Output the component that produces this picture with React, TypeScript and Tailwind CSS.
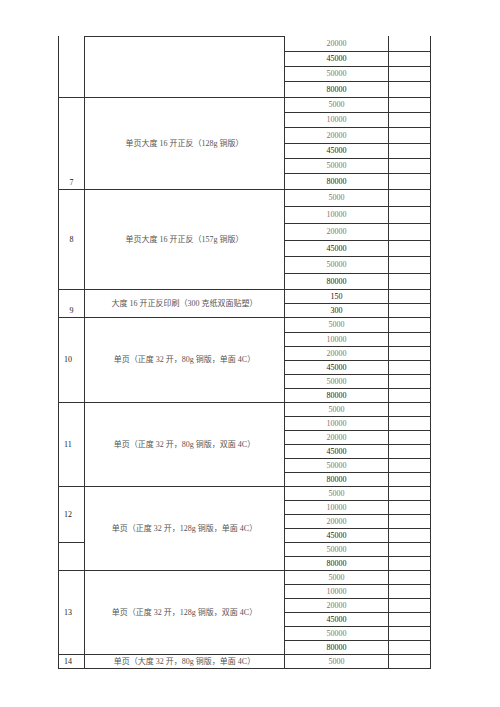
import React from "react";

type Row = { q: string; h: string };
type Group = {
  num: string;
  numAlign: "center" | "bottom" | "left" | "split";
  desc: string;
  topBorder?: boolean;
  rows: Row[];
};

const dark = new Set(["45000", "80000", "150", "300"]);

const r = (qs: string[], hs: string[]): Row[] => qs.map((q, i) => ({ q, h: hs[i] }));
const six = ["5000", "10000", "20000", "45000", "50000", "80000"];
const h14 = ["h-[14px]", "h-[14px]", "h-[14px]", "h-[14px]", "h-[14px]", "h-[14px]"];

const groups: Group[] = [
  {
    num: "",
    numAlign: "center",
    desc: "",
    topBorder: true,
    rows: r(["20000", "45000", "50000", "80000"], ["h-[16px]", "h-[15px]", "h-[15px]", "h-[16px]"]),
  },
  {
    num: "7",
    numAlign: "bottom",
    desc: "单页大度 16 开正反（128g 铜版）",
    rows: r(six, ["h-[15px]", "h-[15px]", "h-[16px]", "h-[15px]", "h-[15px]", "h-[16px]"]),
  },
  {
    num: "8",
    numAlign: "center",
    desc: "单页大度 16 开正反（157g 铜版）",
    rows: r(six, ["h-[17px]", "h-[17px]", "h-[17px]", "h-[16px]", "h-[17px]", "h-[16px]"]),
  },
  {
    num: "9",
    numAlign: "bottom",
    desc: "大度 16 开正反印刷（300 克纸双面贴塑）",
    rows: r(["150", "300"], ["h-[14px]", "h-[14px]"]),
  },
  {
    num: "10",
    numAlign: "left",
    desc: "单页（正度 32 开，80g 铜版，单面 4C）",
    rows: r(six, ["h-[15px]", "h-[14px]", "h-[14px]", "h-[14px]", "h-[14px]", "h-[14px]"]),
  },
  {
    num: "11",
    numAlign: "left",
    desc: "单页（正度 32 开，80g 铜版，双面 4C）",
    rows: r(six, h14),
  },
  {
    num: "12",
    numAlign: "split",
    desc: "单页（正度 32 开，128g 铜版，单面 4C）",
    rows: r(six, h14),
  },
  {
    num: "13",
    numAlign: "left",
    desc: "单页（正度 32 开，128g 铜版，双面 4C）",
    rows: r(six, h14),
  },
  {
    num: "14",
    numAlign: "left",
    desc: "单页（大度 32 开，80g 铜版，单面 4C）",
    rows: r(["5000"], ["h-[14px]"]),
  },
];

function NumCell({ g }: { g: Group }) {
  if (g.numAlign === "split") {
    return (
      <div className="w-[26px] flex flex-col border-r border-b border-[#333]">
        <div className="h-[56px] flex items-center pl-[5px] border-b border-[#333] text-[#222]">{g.num}</div>
        <div className="flex-1" />
      </div>
    );
  }
  const cls =
    g.numAlign === "bottom"
      ? "items-end justify-center pb-[2px]"
      : g.numAlign === "left"
      ? "items-center pl-[5px]"
      : "items-center justify-center";
  return (
    <div className={`w-[26px] flex border-r border-b border-[#333] text-[#222] ${cls}`}>{g.num}</div>
  );
}

export default function App() {
  return (
    <div
      className="w-[500px] h-[707px] bg-white pt-[36px] text-[8px] leading-none"
      style={{ fontFamily: '"Liberation Serif", "Noto Sans CJK SC", serif' }}
    >
      <div className="ml-[58px] w-[373px] border-l border-[#333]">
        {groups.map((g, gi) => (
          <div key={gi} className="flex">
            {gi === 0 ? (
              <div className="w-[26px] border-r border-b border-[#333]" />
            ) : (
              <NumCell g={g} />
            )}
            <div
              className={`w-[200px] flex items-center justify-center border-r border-b border-[#333] text-[#555] whitespace-nowrap ${
                g.topBorder ? "border-t" : ""
              }`}
            >
              {g.desc}
            </div>
            <div className="flex flex-col">
              {g.rows.map((row, ri) => (
                <div key={ri} className={`flex ${row.h}`}>
                  <div
                    className={`w-[104px] flex items-center justify-center border-r border-b border-[#333] ${
                      dark.has(row.q) ? "text-[#1a1a1a]" : "text-[#777]"
                    }`}
                  >
                    {row.q}
                  </div>
                  <div className="w-[42px] border-r border-b border-[#333]" />
                </div>
              ))}
            </div>
          </div>
        ))}
      </div>
    </div>
  );
}
